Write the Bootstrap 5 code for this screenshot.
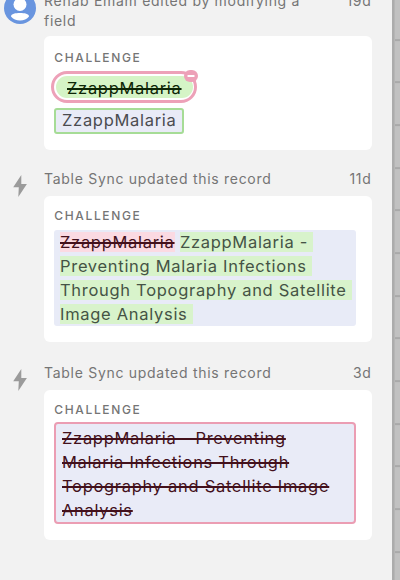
<!DOCTYPE html>
<html lang="en">
<head>
<meta charset="utf-8">
<meta name="viewport" content="width=device-width, initial-scale=1">
<title>Record activity</title>
<link href="https://cdn.jsdelivr.net/npm/bootstrap@5.3.0/dist/css/bootstrap.min.css" rel="stylesheet">
<style>
body{font-family:Inter,"Liberation Sans",sans-serif;background:#f2f2f2;height:580px;overflow:hidden}
.feed{width:392px;height:580px}
.grid-edge{width:8px;background:linear-gradient(90deg,#acacac 0 2px,#b5b5b5 2px 3px,transparent 3px),repeating-linear-gradient(#c1c1c1 0 40.67px,#a9a9a9 40.67px 42.67px);background-position:0 0,0 -1.9px}
.side{width:44px}
.main{width:328px}
.meta{font-size:14px;line-height:20px;color:#757575;letter-spacing:.71px}
.meta .age{letter-spacing:.7px;margin-right:.5px}
.panel{background:#fff;border-radius:6px;padding:0 16px 0 10px}
.label{font-size:12px;line-height:16px;font-weight:500;letter-spacing:1.65px;color:#757575;padding-top:12px;padding-left:.3px}
.value{font-size:16.5px;line-height:24px;letter-spacing:.7px;color:#4b4b50}
.event-first{margin-top:-9px;height:159px}
.event-first .meta{height:45px}
.event-first .panel{height:114px}
.event-first .label{padding-top:14px}
.event-sync{margin-top:19px;height:173px}
.event-sync .panel{height:146px}
.event-clear{margin-top:21px;height:177px}
.event-clear .panel{height:150px}
.meta-row{height:27px}
.pill-removed{width:146px;height:32px;margin:5px 0 0 -3px;border:3px solid #eda1b8;border-radius:16px;padding:2px}
.pill-removed>div{width:137px;background:#d5f4c6;border-radius:12px;height:22px;line-height:24px;padding-left:11px;color:#0d2606;text-decoration:line-through;text-decoration-thickness:2px}
.minus{top:-4px;right:-4px;width:14px;height:12px}
.added-value{width:130px;height:26px;margin-top:5px;border:2px solid #a6dc96;border-radius:3px;background:#e9ebf7;padding-left:6px;line-height:21px}
.diff{width:302px;height:96px;margin-top:6px;padding-left:6px;border-radius:3px;background:#e8ebf7;white-space:pre}
.ins{background:#d8f3cb;color:#455345}
.del{background:#fbdae2;color:#43101b;text-decoration:line-through;text-decoration-thickness:2px}
.cleared{width:302px;height:102px;margin-top:4px;padding:2px 6px 0;border:2px solid #eb9db3;border-radius:4px;background:#e9ebf7;color:#43101b;text-decoration:line-through;text-decoration-thickness:2px;white-space:pre}
.avatar{margin:0 0 0 4px}
.bolt{margin:6px 0 0 12px}
svg{display:block}
</style>
<script src="https://cdn.jsdelivr.net/npm/bootstrap@5.3.0/dist/js/bootstrap.bundle.min.js"></script>
</head>
<body>
<div class="d-flex">
<main class="feed d-flex flex-column overflow-hidden">
  <section class="event-first d-flex flex-shrink-0">
    <div class="side"><svg class="avatar" width="32" height="33" viewBox="0 0 32 33"><circle cx="16" cy="17" r="16" fill="#6995df"/><circle cx="16" cy="13.500" r="6.500" fill="#fff"/><path d="M7 25.500C7 22.700 11.500 22 16 22s9 .7 9 3.500c-2 2.500-5.300 4-9 4s-7-1.500-9-4Z" fill="#fff"/></svg></div>
    <div class="main">
      <div class="meta d-flex justify-content-between"><div>Rehab Emam edited by modifying a<br>field</div><span class="age">19d</span></div>
      <div class="panel">
        <div class="label">CHALLENGE</div>
        <div class="pill-removed value position-relative"><div>ZzappMalaria</div><svg class="minus position-absolute" viewBox="0 0 14 12"><rect width="14" height="12" rx="6" fill="#eda1b8"/><rect x="3.500" y="5" width="7" height="2" rx=".5" fill="#fff"/></svg></div>
        <div class="added-value value">ZzappMalaria</div>
      </div>
    </div>
  </section>
  <section class="event-sync d-flex flex-shrink-0">
    <div class="side"><svg class="bolt" width="16" height="22" viewBox="0 0 16 22"><path d="M9.300 0 1.200 12.300H6.800L6.300 22 14.900 9H9.300Z" fill="#9b9b9b"/></svg></div>
    <div class="main">
      <div class="meta meta-row d-flex justify-content-between"><span>Table Sync updated this record</span><span class="age">11d</span></div>
      <div class="panel">
        <div class="label">CHALLENGE</div>
        <div class="diff value"><span class="del">ZzappMalaria</span> <span class="ins">ZzappMalaria - 
Preventing Malaria Infections 
Through Topography and Satellite 
Image Analysis </span></div>
      </div>
    </div>
  </section>
  <section class="event-clear d-flex flex-shrink-0">
    <div class="side"><svg class="bolt" width="16" height="22" viewBox="0 0 16 22"><path d="M9.300 0 1.200 12.300H6.800L6.300 22 14.900 9H9.300Z" fill="#9b9b9b"/></svg></div>
    <div class="main">
      <div class="meta meta-row d-flex justify-content-between"><span>Table Sync updated this record</span><span class="age">3d</span></div>
      <div class="panel">
        <div class="label">CHALLENGE</div>
        <div class="cleared value">ZzappMalaria - Preventing
Malaria Infections Through
Topography and Satellite Image
Analysis</div>
      </div>
    </div>
  </section>
</main>
<aside class="grid-edge"></aside>
</div>
</body>
</html>
